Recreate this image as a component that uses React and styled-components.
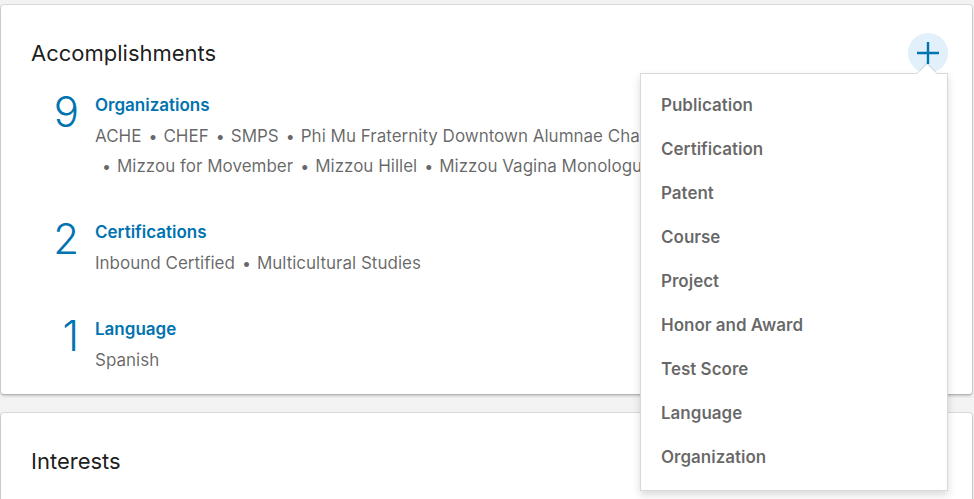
import styled, { createGlobalStyle } from "styled-components";

const GlobalStyle = createGlobalStyle`
  html, body {
    margin: 0;
    background: #f3f3f3;
  }
  body {
    padding: 5px 2px 0 1px;
    font-family: Inter, "Noto Sans", "Liberation Sans", sans-serif;
    -webkit-font-smoothing: antialiased;
    overflow: hidden;
  }
`;

const sections = [
  {
    count: 9,
    title: "Organizations",
    items: [
      "ACHE",
      "CHEF",
      "SMPS",
      "Phi Mu Fraternity Downtown Alumnae Chapter",
      "Mizzou for Movember",
      "Mizzou Hillel",
      "Mizzou Vagina Monologues",
    ],
  },
  {
    count: 2,
    title: "Certifications",
    items: ["Inbound Certified", "Multicultural Studies"],
  },
  { count: 1, title: "Language", items: ["Spanish"] },
];

const menuItems = [
  "Publication",
  "Certification",
  "Patent",
  "Course",
  "Project",
  "Honor and Award",
  "Test Score",
  "Language",
  "Organization",
];

export default function App() {
  return (
    <>
      <GlobalStyle />
      <Card>
        <Header>
          <CardTitle>Accomplishments</CardTitle>
          <AddWrap>
            <AddButton aria-label="Add accomplishment">
              <svg width="24" height="24" viewBox="0 0 24 24">
                <path d="M12 1v22M1 12h22" stroke="#0073b1" strokeWidth="2.4" fill="none" />
              </svg>
            </AddButton>
            <Menu>
              {menuItems.map((m) => (
                <MenuItem key={m}>{m}</MenuItem>
              ))}
            </Menu>
          </AddWrap>
        </Header>
        <Sections>
          {sections.map((s) => (
            <Section key={s.title}>
              <Count>{s.count}</Count>
              <div>
                <SectionTitle>{s.title}</SectionTitle>
                <ItemList>
                  {s.items.map((it) => (
                    <Item key={it}>{it}</Item>
                  ))}
                </ItemList>
              </div>
            </Section>
          ))}
        </Sections>
      </Card>
      <Card $gap>
        <Header>
          <CardTitle>Interests</CardTitle>
        </Header>
      </Card>
    </>
  );
}

const Card = styled.section`
  background: #fff;
  border-radius: 3px;
  box-shadow: 0 0 0 1px rgba(0, 0, 0, 0.1), 0 2px 3px rgba(0, 0, 0, 0.2);
  padding: 28px 24px 19px 30px;
  margin-top: ${(p) => (p.$gap ? "19px" : "0")};
  min-height: ${(p) => (p.$gap ? "120px" : "auto")};
`;

const Header = styled.div`
  display: flex;
  align-items: center;
  justify-content: space-between;
  height: 40px;
`;

const CardTitle = styled.h2`
  margin: 0;
  font-size: 22px;
  font-weight: 400;
  line-height: 40px;
  color: rgba(0, 0, 0, 0.9);
`;

const AddWrap = styled.div`
  position: relative;
  z-index: 5;
`;

const AddButton = styled.button`
  width: 40px;
  height: 40px;
  border-radius: 50%;
  border: none;
  padding: 0;
  background: #e1f0fa;
  display: flex;
  align-items: center;
  justify-content: center;
  cursor: pointer;
`;

const Menu = styled.ul`
  position: absolute;
  top: 100%;
  right: 0;
  width: 306px;
  margin: 0;
  padding: 9px 0 11px;
  list-style: none;
  background: #fff;
  border: 1px solid rgba(0, 0, 0, 0.15);
  box-shadow: 0 4px 8px rgba(0, 0, 0, 0.15);

  &::before,
  &::after {
    content: "";
    position: absolute;
    right: 10px;
    width: 0;
    height: 0;
    border-left: 10px solid transparent;
    border-right: 10px solid transparent;
  }
  &::before {
    top: -11px;
    border-bottom: 10px solid rgba(0, 0, 0, 0.15);
  }
  &::after {
    top: -10px;
    border-bottom: 10px solid #fff;
  }
`;

const MenuItem = styled.li`
  height: 44px;
  line-height: 44px;
  padding-left: 20px;
  font-size: 17px;
  font-weight: 600;
  color: rgba(0, 0, 0, 0.6);
`;

const Sections = styled.div`
  margin-top: 20px;
  display: flex;
  flex-direction: column;
  gap: 39px;
`;

const Section = styled.div`
  display: flex;
  align-items: flex-start;
`;

const Count = styled.div`
  width: 48px;
  margin-top: -2px;
  margin-right: 16px;
  text-align: right;
  font-size: 42px;
  line-height: 42px;
  font-weight: 300;
  color: #0073b1;
`;

const SectionTitle = styled.h3`
  margin: 0 0 4px;
  font-size: 17px;
  line-height: 24px;
  font-weight: 600;
  color: #0073b1;
`;

const ItemList = styled.ul`
  margin: 0;
  padding: 0;
  list-style: none;
  max-width: 760px;
  font-size: 17px;
  line-height: 30px;
  color: rgba(0, 0, 0, 0.6);
`;

const Item = styled.li`
  display: inline-block;
  white-space: nowrap;

  & + &::before {
    content: "•";
    margin: 0 6px 0 7px;
    font-size: 16px;
  }
`;
